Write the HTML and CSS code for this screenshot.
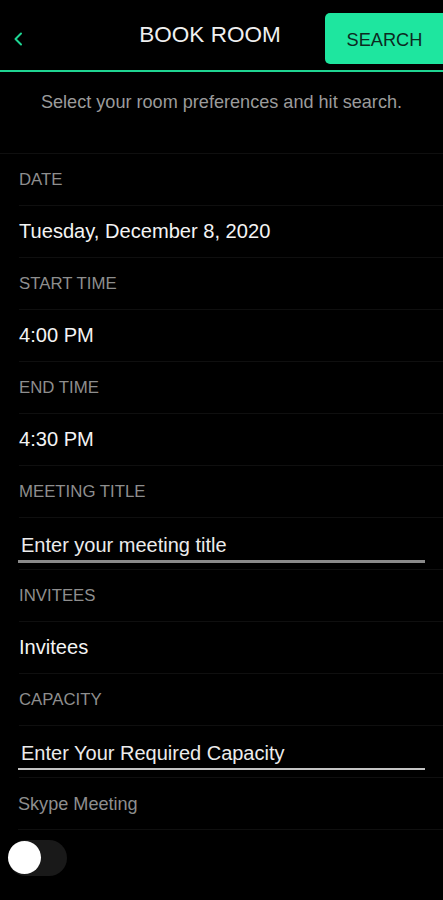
FILE: index.html
```html
<!DOCTYPE html>
<html>
<head>
<meta charset="utf-8">
<link rel="stylesheet" href="styles.css">
</head>
<body>
<div class="app">
  <header class="topbar">
    <div class="back">
      <svg width="10" height="14" viewBox="0 0 10 14"><path d="M8 1.5 L2.5 7 L8 12.5" fill="none" stroke="#1ed593" stroke-width="2" stroke-linecap="round" stroke-linejoin="round"/></svg>
    </div>
    <h1 class="title">BOOK ROOM</h1>
    <button class="search">SEARCH</button>
  </header>
  <p class="intro">Select your room preferences and hit search.</p>
  <div class="form">
    <div class="row label">DATE</div>
    <div class="row value">Tuesday, December 8, 2020</div>
    <div class="row label">START TIME</div>
    <div class="row value">4:00 PM</div>
    <div class="row label">END TIME</div>
    <div class="row value">4:30 PM</div>
    <div class="row label">MEETING TITLE</div>
    <div class="row field"><input class="input input-thick" placeholder="Enter your meeting title"></div>
    <div class="row label">INVITEES</div>
    <div class="row value">Invitees</div>
    <div class="row label">CAPACITY</div>
    <div class="row field"><input class="input input-thin" placeholder="Enter Your Required Capacity"></div>
    <div class="row label label-plain">Skype Meeting</div>
    <div class="row toggle-row"><div class="toggle"><div class="knob"></div></div></div>
  </div>
</div>
</body>
</html>
```
FILE: styles.css
```css
* { box-sizing: border-box; }
body {
  margin: 0;
  background: #000;
  font-family: "Liberation Sans", Arial, sans-serif;
  color: #f2f2f2;
}
.app { width: 443px; min-height: 900px; background: #000; }
.topbar {
  display: grid;
  grid-template-columns: 95px 1fr 118px;
  align-items: start;
  height: 72px;
  border-bottom: 2px solid #1fd492;
}
.back { padding: 32px 0 0 13px; height: 46px; }
.back svg { display: block; }
.title {
  margin: 23px 0 0;
  font-size: 22.5px;
  line-height: 24px;
  font-weight: normal;
  text-align: center;
  color: #f0f0f0;
}
.search {
  margin-top: 13px;
  height: 51px;
  width: 118px;
  border: none;
  border-radius: 5px 0 0 5px;
  background: #1ee69f;
  color: #0d2a1f;
  font-family: "Liberation Sans", Arial, sans-serif;
  font-size: 18.2px;
  padding: 4px 0 0 1px;
}
.intro {
  margin: 0;
  padding: 20px 0 0;
  height: 82px;
  font-size: 18.1px;
  line-height: 20px;
  color: #9b9b9b;
  text-align: center;
  border-bottom: 1px solid #0f0f0f;
}
.form { padding-left: 19px; }
.row {
  height: 52px;
  border-bottom: 1px solid #0f0f0f;
  display: flex;
  align-items: center;
}
.label {
  font-size: 16.8px;
  color: #8e8e8e;
  padding-top: 1px;
}
.label-plain { font-size: 18.1px; margin-left: -1px; }
.value { font-size: 20.1px; color: #f4f4f4; }
.field { align-items: flex-start; padding-top: 12px; }
.input {
  margin-left: -1px;
  width: 407px;
  height: 33px;
  background: transparent;
  border: none;
  outline: none;
  padding: 0 0 0 3px;
  font-family: "Liberation Sans", Arial, sans-serif;
  font-size: 20px;
  color: #eee;
}
.input::placeholder { color: #ececec; opacity: 1; }
.input-thick { border-bottom: 3px solid #8a8a8a; }
.input-thin { height: 32px; border-bottom: 2px solid #c4c4c4; }
.toggle-row { border-bottom: none; }
.toggle {
  margin-left: -11px;
  margin-top: 3px;
  width: 59px;
  height: 36px;
  border-radius: 18px;
  background: #191919;
  position: relative;
}
.knob {
  position: absolute;
  left: 0;
  top: 1.5px;
  width: 33px;
  height: 33px;
  border-radius: 50%;
  background: #fff;
}
```
